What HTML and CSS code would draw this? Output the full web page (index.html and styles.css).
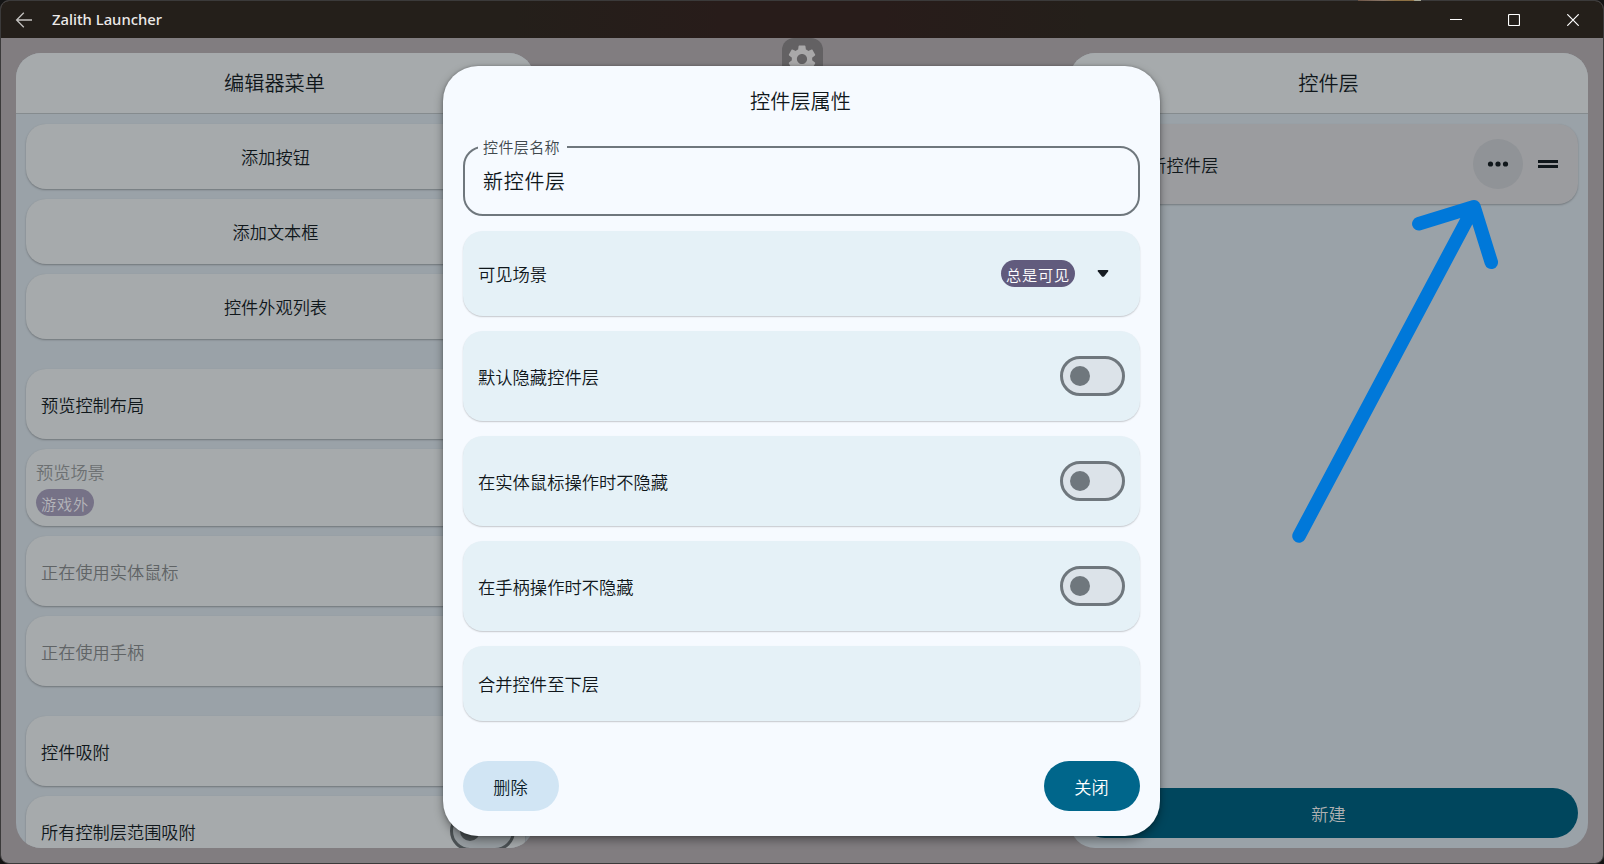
FILE: index.html
```html
<!DOCTYPE html>
<html lang="zh-CN">
<head>
<meta charset="utf-8">
<title>Zalith Launcher</title>
<link rel="stylesheet" href="styles.css">
</head>
<body>
<div class="window">
  <header class="titlebar">
    <svg class="back" width="18" height="18" viewBox="0 0 18 18"><path d="M17 9H2M8.8 1.8 1.6 9l7.2 7.2"/></svg>
    <span class="app-name">Zalith Launcher</span>
    <div class="controls">
      <svg width="12" height="12" viewBox="0 0 12 12"><path d="M0 5.5h12"/></svg>
      <svg width="12" height="12" viewBox="0 0 12 12"><rect x=".5" y=".5" width="11" height="11" rx="1"/></svg>
      <svg width="12" height="12" viewBox="0 0 12 12"><path d="M.3.3l11.4 11.4M11.7.3.3 11.7"/></svg>
    </div>
  </header>

  <main class="stage">
    <section class="panel">
      <h2 class="panel-title">编辑器菜单</h2>
      <div class="menu">
        <div class="group">
          <button class="item action">添加按钮</button>
          <button class="item action">添加文本框</button>
          <button class="item action">控件外观列表</button>
        </div>
        <div class="group">
          <div class="item row">预览控制布局</div>
          <div class="item scene"><span class="line">预览场景</span><span class="tag dimmed">游戏外</span></div>
          <div class="item row disabled">正在使用实体鼠标</div>
          <div class="item row disabled">正在使用手柄</div>
        </div>
        <div class="group">
          <div class="item row">控件吸附</div>
          <div class="item row">所有控制层范围吸附<span class="switch dark"></span></div>
        </div>
      </div>
    </section>

    <div class="gear">
      <svg width="34" height="34" viewBox="0 0 24 24"><path d="M19.14 12.94c.04-.3.06-.61.06-.94 0-.32-.02-.64-.07-.94l2.03-1.58c.18-.14.23-.41.12-.61l-1.92-3.32c-.12-.22-.37-.29-.59-.22l-2.39.96c-.5-.38-1.03-.7-1.62-.94l-.36-2.54c-.04-.24-.24-.41-.48-.41h-3.84c-.24 0-.43.17-.47.41l-.36 2.54c-.59.24-1.13.57-1.62.94l-2.39-.96c-.22-.08-.47 0-.59.22L2.74 8.87c-.12.21-.08.47.12.61l2.03 1.58c-.05.3-.09.63-.09.94s.02.64.07.94l-2.03 1.58c-.18.14-.23.41-.12.61l1.92 3.32c.12.22.37.29.59.22l2.39-.96c.5.38 1.03.7 1.62.94l.36 2.54c.05.24.24.41.48.41h3.84c.24 0 .44-.17.47-.41l.36-2.54c.59-.24 1.13-.56 1.62-.94l2.39.96c.22.08.47 0 .59-.22l1.92-3.32c.12-.22.07-.47-.12-.61l-2.01-1.58zM12 15.6c-1.98 0-3.6-1.62-3.6-3.6s1.62-3.6 3.6-3.6 3.6 1.62 3.6 3.6-1.62 3.6-3.6 3.6z"/></svg>
    </div>

    <section class="panel">
      <h2 class="panel-title">控件层</h2>
      <div class="layers">
        <div class="layer">
          <span class="layer-name">新控件层</span>
          <span class="more"><svg width="22" height="6" viewBox="0 0 22 6"><circle cx="3.5" cy="3" r="2.6"/><circle cx="11" cy="3" r="2.6"/><circle cx="18.5" cy="3" r="2.6"/></svg></span>
          <span class="drag"></span>
        </div>
        <button class="create">新建</button>
      </div>
    </section>
  </main>
</div>
<div class="backdrop-edge"></div>

<div class="overlay">
  <div class="dialog">
    <h1 class="dialog-title">控件层属性</h1>
    <div class="field"><span class="field-label">控件层名称</span>新控件层</div>
    <div class="options">
      <div class="option first">可见场景<span class="tag">总是可见</span><svg class="caret" width="12" height="8" viewBox="0 0 12 8"><path d="M1.4 0h9.2c.8 0 1 .8.5 1.6L7.3 6.2q-1.3 1.3-2.6 0L.9 1.6C.4.8.6 0 1.4 0z"/></svg></div>
      <div class="option">默认隐藏控件层<span class="switch"></span></div>
      <div class="option">在实体鼠标操作时不隐藏<span class="switch"></span></div>
      <div class="option">在手柄操作时不隐藏<span class="switch"></span></div>
      <div class="option last">合并控件至下层</div>
    </div>
    <div class="buttons">
      <button class="btn soft">删除</button>
      <button class="btn solid">关闭</button>
    </div>
  </div>
</div>

<svg class="pointer" width="1604" height="864" viewBox="0 0 1604 864"><path d="M1299 536 1474 206.8M1418.8 223.8 1474 206.8 1491.3 262.3"/></svg>
</body>
</html>
```
FILE: styles.css
```css
* { box-sizing: border-box; }

body {
  margin: 0;
  height: 864px;
  overflow: hidden;
  background: #141414;
  color: #10171b;
  font-family: "Noto Sans CJK SC", sans-serif;
  font-size: 17.2px;
  font-weight: 350;
}

h1, h2 { margin: 0; font-weight: inherit; font-size: 20.2px; }

button {
  border: 0;
  padding: 0;
  font: inherit;
  color: inherit;
}

.window {
  height: 864px;
  border: 1px solid #3b3a3a;
  border-radius: 9px;
  overflow: hidden;
  display: flex;
  flex-direction: column;
  background: #817d80;
}

/* Sliver of the desktop showing above the window frame */
.backdrop-edge {
  position: absolute;
  top: 0;
  left: 1358px;
  width: 63px;
  height: 1px;
  background: linear-gradient(90deg, #6e5546, #8a7668 40%, #8d7043 60%, #8d7043 88%, #a9aa98 90%);
}

.titlebar {
  flex: none;
  height: 37px;
  padding: 0 24px 0 14px;
  display: flex;
  align-items: center;
  background: linear-gradient(90deg, #241f1a 32%, #281c1a 45%, #281c1a 55%, #241f1a 68%);
}

.back { fill: none; stroke: #c4c2c0; stroke-width: 1.3; }

.app-name {
  margin-left: 19px;
  padding-bottom: 2px;
  font: 500 14.8px "Noto Sans", sans-serif;
  color: #eceae8;
}

.controls { margin-left: auto; display: flex; gap: 46px; }
.controls svg { fill: none; stroke: #fff; stroke-width: 1.2; }
.controls svg:last-child { margin-left: 1px; }

.stage {
  flex: 1;
  min-height: 0;
  padding: 15px 15px 15px;
  display: flex;
  justify-content: space-between;
}

.panel {
  width: 518px;
  border-radius: 25px;
  overflow: hidden;
  display: flex;
  flex-direction: column;
  background: #9aa2a8;
}

.panel-title {
  flex: none;
  height: 61px;
  padding: 0 1px 2px 0;
  display: flex;
  align-items: center;
  justify-content: center;
  background: #a6aaac;
  border-bottom: 1px solid #858b8e;
}

.menu {
  padding: 10px 9px 0 10px;
  display: flex;
  flex-direction: column;
  gap: 30px;
}

.group { display: flex; flex-direction: column; gap: 10px; }

.item {
  flex: none;
  display: flex;
  align-items: center;
  border-radius: 20px;
  background: #a6aaac;
  box-shadow: 0 1px 2px rgba(0, 0, 0, .28);
}

.action { height: 65px; justify-content: center; padding-bottom: 1px; }
.row { height: 70px; padding: 1px 10px 0 15px; justify-content: space-between; }
.row .switch { margin-top: -1px; }
.disabled { color: #606466; }

.scene {
  height: 77px;
  padding: 10px;
  flex-direction: column;
  align-items: flex-start;
  justify-content: space-between;
  color: #6c7072;
}
.line { line-height: 26px; }

.tag {
  height: 27px;
  padding: 0 5px;
  display: flex;
  align-items: center;
  border-radius: 14px;
  background: #615b7d;
  color: #fff;
  font-size: 15.2px;
  letter-spacing: .8px;
  white-space: nowrap;
}
.tag.dimmed { background: #767287; color: #b4b5ba; }

.gear {
  align-self: flex-start;
  width: 41px;
  height: 41px;
  margin: -15px 0 0 1px;
  display: grid;
  place-items: center;
  border-radius: 12px;
  background: #636163;
}
.gear svg { margin-right: 1px; fill: #a9a8a9; }

.layers {
  flex: 1;
  padding: 10px;
  display: flex;
  flex-direction: column;
  justify-content: space-between;
}

.layer {
  height: 80px;
  padding: 0 20px 0 69px;
  display: flex;
  align-items: center;
  border-radius: 20px;
  background: #9b9c9f;
  box-shadow: 0 1px 2px rgba(0, 0, 0, .25);
}
.layer-name { flex: 1; padding-top: 1px; letter-spacing: .2px; }

.more {
  width: 50px;
  height: 50px;
  margin-right: 15px;
  display: grid;
  place-items: center;
  border-radius: 50%;
  background: #909397;
}
.more svg { fill: #10171b; }

.drag {
  width: 20px;
  height: 8px;
  border: solid #10171b;
  border-width: 3px 0;
}

.create {
  height: 50px;
  padding-right: 1px;
  border-radius: 25px;
  background: #00465d;
  color: #aeb0b1;
}

.overlay {
  position: absolute;
  inset: 38px 1px 0 0;
  padding: 28px 0;
  display: flex;
  justify-content: center;
}

.dialog {
  width: 717px;
  height: 770px;
  padding: 20px 20px 25px;
  display: flex;
  flex-direction: column;
  border-radius: 35px;
  background: #f6faff;
  box-shadow: 0 4px 10px rgba(0, 0, 0, .38), 0 0 3px rgba(0, 0, 0, .25);
}

.dialog-title { height: 30px; padding-right: 2px; line-height: 29px; text-align: center; }

.field {
  position: relative;
  height: 70px;
  margin: 30px 0 15px;
  padding: 0 18px 1px;
  display: flex;
  align-items: center;
  border: 2px solid #6f777d;
  border-radius: 20px;
  font-size: 20px;
  letter-spacing: .7px;
}

.field-label {
  position: absolute;
  left: 13px;
  top: -12px;
  padding: 0 6.5px 0 5px;
  background: #f6faff;
  color: #40484d;
  font-size: 15px;
  letter-spacing: .4px;
  line-height: 22px;
}

.options { display: flex; flex-direction: column; gap: 15px; }

.option {
  height: 90px;
  padding: 0 15px;
  display: flex;
  align-items: center;
  border-radius: 20px;
  background: #e5f1f7;
  box-shadow: 0 1px 1.5px rgba(0, 0, 0, .2);
  font-size: 17.3px;
}
.option.first { height: 85px; }
.option.last { height: 75px; }
.option .tag { margin-left: auto; }
.caret { margin: 0 16.5px 0 21.5px; fill: #161c22; }

.switch {
  position: relative;
  width: 65px;
  height: 40px;
  margin-left: auto;
  border: 3px solid #6f777d;
  border-radius: 20px;
  background: #dce3e9;
}
.switch::before {
  content: "";
  position: absolute;
  left: 7px;
  top: 7px;
  width: 20px;
  height: 20px;
  border-radius: 50%;
  background: #6f777d;
}
.switch.dark { border-color: #4b5154; background: #959b9f; }
.switch.dark::before { background: #4b5154; }

.buttons { margin-top: auto; display: flex; justify-content: space-between; }

.btn {
  width: 96px;
  height: 50px;
  padding-right: 1px;
  border-radius: 25px;
}
.soft { background: #d1e5f4; color: #0b1d29; }
.solid { background: #00668b; color: #fff; }

.pointer {
  position: absolute;
  left: 0;
  top: 0;
  fill: none;
  stroke: #0078d9;
  stroke-width: 13.5;
  stroke-linecap: round;
  stroke-linejoin: round;
}
```
